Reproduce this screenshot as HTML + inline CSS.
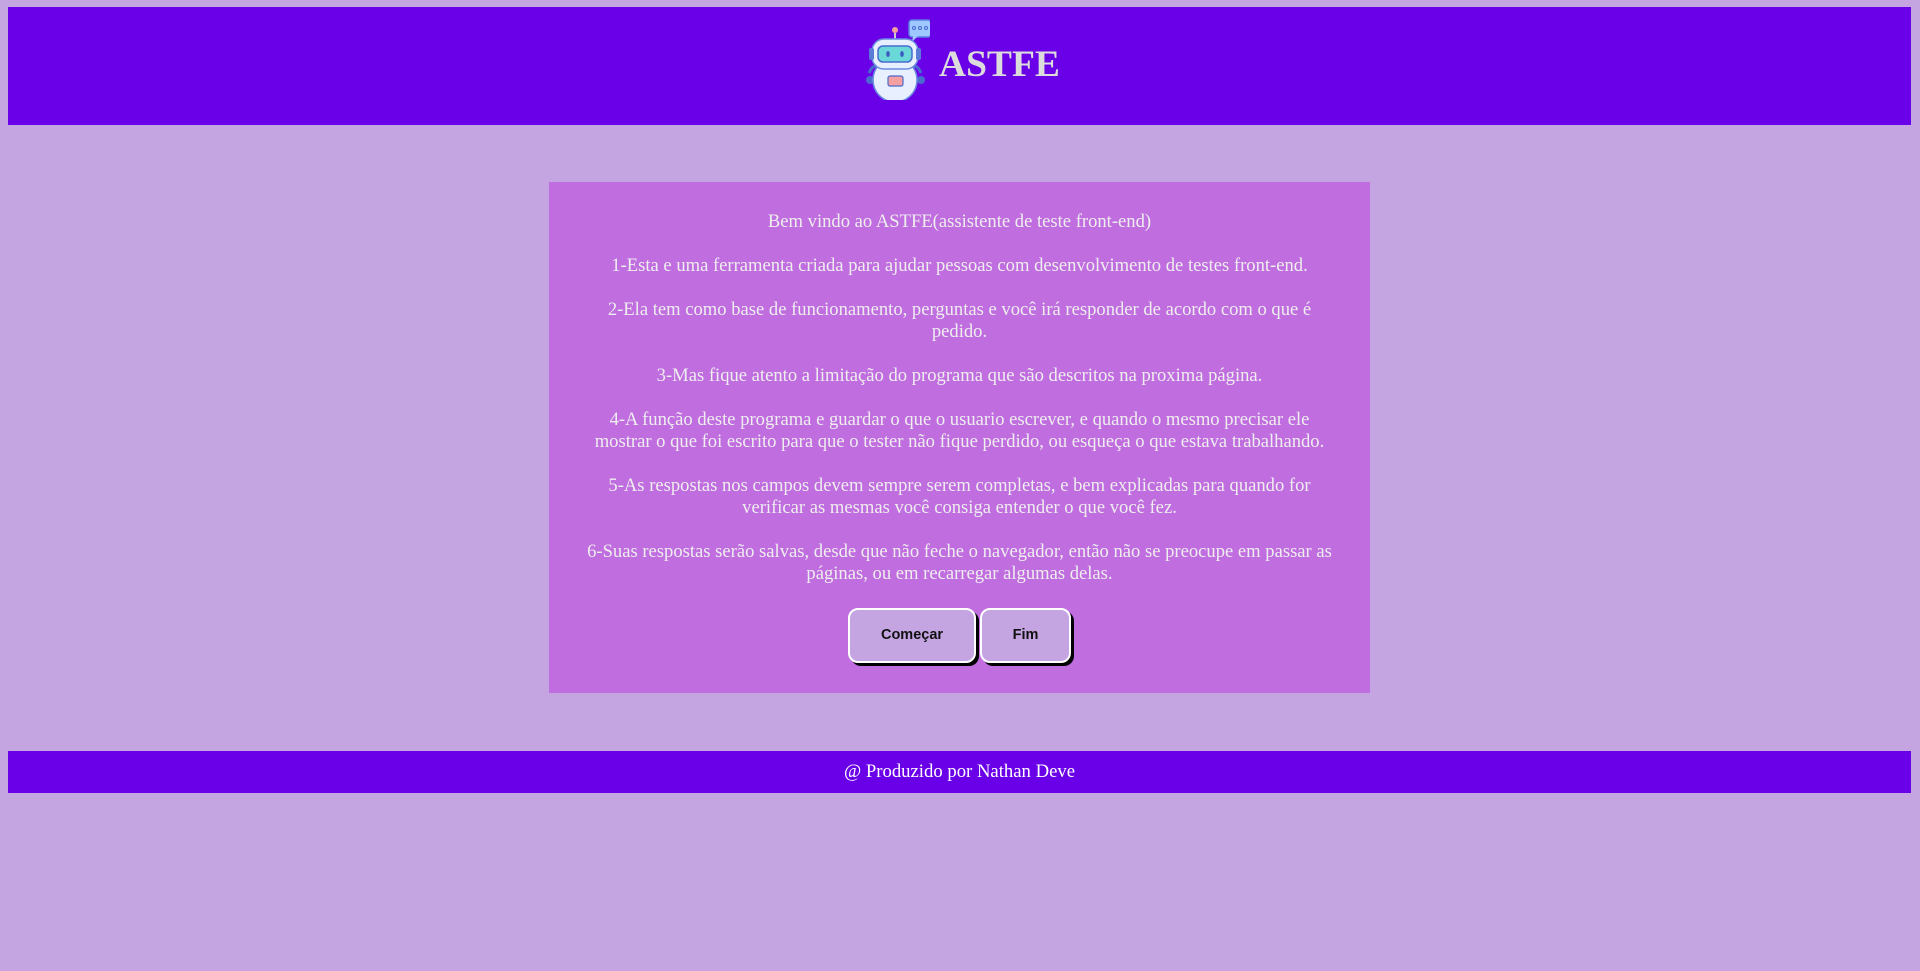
<!DOCTYPE html>
<html><head><meta charset="utf-8"><style>
*{margin:0;padding:0;box-sizing:border-box}
body{width:1920px;height:971px;background:#c4a4e1;font-family:"Liberation Serif",serif;overflow:hidden;position:relative}
.hdr{position:absolute;left:8px;top:7px;width:1903px;height:118px;background:#6a00e8}
.logo{position:absolute;left:866px;top:18px}
.title{position:absolute;left:939px;top:43px;font-size:37.5px;font-weight:bold;color:#dcdcdc}
.card{position:absolute;left:549px;top:182px;width:821px;height:511px;background:#c06de0;color:#eee;text-align:center;font-size:18.6px;line-height:22px;padding:29px 10px 0;white-space:nowrap}
.btns{position:absolute;top:426px;left:0;width:100%;text-align:center;font-size:0}
.b{display:inline-block;height:55px;background:#c4a4e1;border:2px solid #fff;border-radius:10px;box-shadow:3px 3px 0 #000;font:bold 14.5px "Liberation Sans",sans-serif;color:#111;line-height:51px;vertical-align:top}
.ftr{position:absolute;left:8px;top:751px;width:1903px;height:42px;background:#6a00e8;color:#fff;text-align:center;font-size:18.7px;line-height:42px}
</style></head><body>
<div class="hdr"></div>
<svg class="logo" width="64" height="82" viewBox="0 0 64 82">
<rect x="43" y="2" width="22" height="17" rx="3" fill="#9ec8ff" stroke="#5a7fe0" stroke-width="1.5"/>
<path d="M47 18 L46 24 L52 18Z" fill="#9ec8ff"/>
<circle cx="48" cy="10" r="1.5" fill="none" stroke="#4a6ad0"/><circle cx="54" cy="10" r="1.5" fill="none" stroke="#4a6ad0"/><circle cx="60" cy="10" r="1.5" fill="none" stroke="#4a6ad0"/>
<circle cx="29" cy="12" r="3" fill="#f4a0a0"/><rect x="28" y="15" width="2" height="6" fill="#ccc"/>
<path d="M3 55 Q6 48 10 48 M55 55 Q52 48 48 48" stroke="#4a6ad0" stroke-width="3" fill="none"/>
<circle cx="4" cy="62" r="4" fill="#4a6ad0"/><circle cx="55" cy="62" r="4" fill="#4a6ad0"/>
<ellipse cx="29" cy="62" rx="22" ry="22" fill="#e8f0ff" stroke="#6a8ae0" stroke-width="1.5"/>
<rect x="6" y="21" width="46" height="30" rx="12" fill="#e8f0ff" stroke="#6a8ae0" stroke-width="1.5"/>
<rect x="3" y="30" width="5" height="12" rx="2" fill="#5a7ad8"/><rect x="50" y="30" width="5" height="12" rx="2" fill="#5a7ad8"/>
<rect x="12" y="28" width="34" height="16" rx="5" fill="#6ad8d8" stroke="#4a6ad0" stroke-width="1.5"/>
<ellipse cx="22" cy="36" rx="1.8" ry="3" fill="#3a5ac0"/><ellipse cx="36" cy="36" rx="1.8" ry="3" fill="#3a5ac0"/>
<rect x="22" y="58" width="15" height="10" rx="2" fill="#f4a0a0" stroke="#4a6ad0" stroke-width="1.2"/>
</svg>
<div class="title">ASTFE</div>
<div class="card">
Bem vindo ao ASTFE(assistente de teste front-end)<br><br>
1-Esta e uma ferramenta criada para ajudar pessoas com desenvolvimento de testes front-end.<br><br>
2-Ela tem como base de funcionamento, perguntas e você irá responder de acordo com o que é<br>pedido.<br><br>
3-Mas fique atento a limitação do programa que são descritos na proxima página.<br><br>
4-A função deste programa e guardar o que o usuario escrever, e quando o mesmo precisar ele<br>mostrar o que foi escrito para que o tester não fique perdido, ou esqueça o que estava trabalhando.<br><br>
5-As respostas nos campos devem sempre serem completas, e bem explicadas para quando for<br>verificar as mesmas você consiga entender o que você fez.<br><br>
6-Suas respostas serão salvas, desde que não feche o navegador, então não se preocupe em passar as<br>páginas, ou em recarregar algumas delas.
<div class="btns"><span class="b" style="width:128px">Começar</span><span class="b" style="width:91px;margin-left:4px">Fim</span></div>
</div>
<div class="ftr">@ Produzido por Nathan Deve</div>
</body></html>
